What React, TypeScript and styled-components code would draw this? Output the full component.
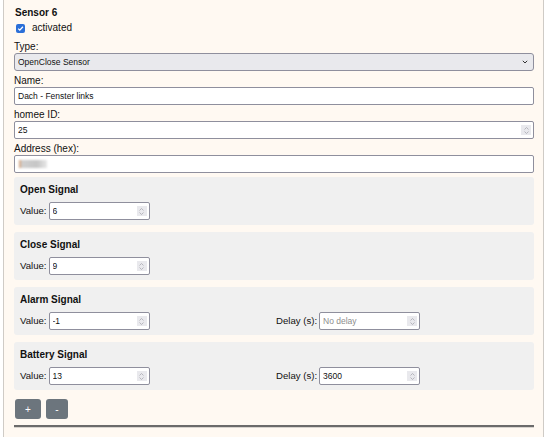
import React from "react";
import styled, { createGlobalStyle } from "styled-components";

const GlobalStyle = createGlobalStyle`
  html, body {
    margin: 0;
    padding: 0;
    background: #ffffff;
  }
  body {
    font-family: "Liberation Sans", Arial, sans-serif;
    color: #111;
  }
`;

type Signal = {
  title: string;
  value: string;
  delay?: string;
};

const signals: Signal[] = [
  { title: "Open Signal", value: "6" },
  { title: "Close Signal", value: "9" },
  { title: "Alarm Signal", value: "-1", delay: "" },
  { title: "Battery Signal", value: "13", delay: "3600" },
];

const Chevron: React.FC<{ up?: boolean }> = ({ up }) => (
  <svg width="5" height="3" viewBox="0 0 5 3">
    <path
      d={up ? "M0.5 2.5 L2.5 0.5 L4.5 2.5" : "M0.5 0.5 L2.5 2.5 L4.5 0.5"}
      fill="none"
      stroke="#a8a8b0"
      strokeWidth="0.8"
    />
  </svg>
);

const NumberField: React.FC<{
  value: string;
  width?: number;
  placeholder?: string;
}> = ({ value, width, placeholder }) => (
  <FieldBox $width={width}>
    <Input defaultValue={value} placeholder={placeholder} />
    <Spinner>
      <Chevron up />
      <Chevron />
    </Spinner>
  </FieldBox>
);

const App: React.FC = () => {
  return (
    <>
      <GlobalStyle />
      <Panel>
        <Title>Sensor 6</Title>
        <CheckRow>
          <CheckBox>
            <svg width="7" height="7" viewBox="0 0 7 7">
              <path
                d="M1.2 3.6 L2.8 5.1 L5.9 1.8"
                fill="none"
                stroke="#fff"
                strokeWidth="1.3"
              />
            </svg>
          </CheckBox>
          <CheckLabel>activated</CheckLabel>
        </CheckRow>

        <Label>Type:</Label>
        <SelectBox>
          <Select defaultValue="openclose">
            <option value="openclose">OpenClose Sensor</option>
          </Select>
          <svg width="6" height="4" viewBox="0 0 6 4">
            <path
              d="M0.8 0.8 L3 3 L5.2 0.8"
              fill="none"
              stroke="#333"
              strokeWidth="1"
            />
          </svg>
        </SelectBox>

        <Label>Name:</Label>
        <FieldBox>
          <Input defaultValue="Dach - Fenster links" />
        </FieldBox>

        <Label>homee ID:</Label>
        <NumberField value="25" />

        <Label>Address (hex):</Label>
        <FieldBox>
          <Redacted />
        </FieldBox>

        <Signals>
          {signals.map((s) => (
            <SignalBox key={s.title}>
              <SignalTitle>{s.title}</SignalTitle>
              <SignalRow>
                <Pair>
                  <InlineLabel>Value:</InlineLabel>
                  <NumberField value={s.value} width={101} />
                </Pair>
                {s.delay !== undefined && (
                  <Pair>
                    <InlineLabel>Delay (s):</InlineLabel>
                    <NumberField
                      value={s.delay}
                      width={101}
                      placeholder="No delay"
                    />
                  </Pair>
                )}
              </SignalRow>
            </SignalBox>
          ))}
        </Signals>

        <Buttons>
          <SmallButton $width={26}>+</SmallButton>
          <SmallButton $width={22}>-</SmallButton>
        </Buttons>
        <Rule />
      </Panel>
    </>
  );
};

export default App;

const Panel = styled.div`
  box-sizing: border-box;
  width: 541px;
  min-height: 100vh;
  margin-left: 3px;
  padding: 7px 9px 20px 10px;
  background: #fff9f2;
  border-left: 1px solid #cfcbc6;
  border-right: 1px solid #cfcbc6;
  font-size: 10px;
`;

const Title = styled.div`
  font-weight: 700;
  font-size: 10px;
  line-height: 12px;
  padding-left: 1px;
  margin-bottom: 3px;
`;

const CheckRow = styled.label`
  display: flex;
  align-items: center;
  gap: 7px;
  height: 12px;
  padding-left: 2px;
  margin-bottom: 7px;
`;

const CheckBox = styled.span`
  display: flex;
  align-items: center;
  justify-content: center;
  width: 9px;
  height: 9px;
  border-radius: 2px;
  background: #2b6fd8;
`;

const CheckLabel = styled.span`
  font-size: 10px;
  line-height: 12px;
`;

const Label = styled.div`
  font-size: 10px;
  line-height: 12px;
`;

const FieldBox = styled.div<{ $width?: number }>`
  box-sizing: border-box;
  display: flex;
  align-items: center;
  width: ${(p) => (p.$width ? `${p.$width}px` : "100%")};
  height: 18px;
  margin-bottom: 4px;
  padding: 0 2px 0 3px;
  background: #ffffff;
  border: 1px solid #8f8f9d;
  border-radius: 2px;
`;

const Input = styled.input`
  flex: 1;
  min-width: 0;
  padding: 0;
  border: none;
  outline: none;
  background: transparent;
  font-family: "Liberation Sans", Arial, sans-serif;
  font-size: 8.5px;
  color: #111;

  &::placeholder {
    color: #8d8d8d;
  }
`;

const Spinner = styled.span`
  display: flex;
  flex-direction: column;
  align-items: center;
  justify-content: center;
  gap: 1px;
  width: 10px;
  height: 10px;
  background: #e9e9ed;
`;

const SelectBox = styled(FieldBox)`
  background: #e9e9ed;
  padding-right: 5px;
  border-radius: 3px;
`;

const Select = styled.select`
  flex: 1;
  appearance: none;
  border: none;
  outline: none;
  padding: 0;
  background: transparent;
  font-family: "Liberation Sans", Arial, sans-serif;
  font-size: 8.5px;
  color: #111;
`;

const Redacted = styled.span`
  display: block;
  width: 28px;
  height: 8px;
  margin-left: 1px;
  background: linear-gradient(
    to right,
    #d99a6a 0,
    #cfcfcf 3px,
    #c6c6c6 18px,
    #e8e8e8 28px
  );
  filter: blur(1.2px);
`;

const Signals = styled.div`
  display: flex;
  flex-direction: column;
  gap: 7px;
  margin-top: 4px;
`;

const SignalBox = styled.div`
  box-sizing: border-box;
  height: 48px;
  padding: 7px 6px 0;
  background: #f0f0f0;
  border-radius: 3px;
`;

const SignalTitle = styled.div`
  font-weight: 700;
  font-size: 10px;
  line-height: 12px;
  margin-bottom: 6px;
`;

const SignalRow = styled.div`
  display: grid;
  grid-template-columns: 1fr 1fr;
  column-gap: 4px;
`;

const Pair = styled.div`
  display: flex;
  align-items: center;
  gap: 2px;

  & > div {
    margin-bottom: 0;
  }
`;

const InlineLabel = styled.span`
  font-size: 9.6px;
  line-height: 12px;
`;

const Buttons = styled.div`
  display: flex;
  gap: 5px;
  margin-top: 9px;
  padding-left: 1px;
`;

const SmallButton = styled.button<{ $width: number }>`
  width: ${(p) => p.$width}px;
  height: 20px;
  padding: 0;
  border: none;
  border-radius: 3px;
  background: #6c757d;
  color: #fff;
  font-family: "Liberation Sans", Arial, sans-serif;
  font-size: 10px;
  cursor: pointer;
`;

const Rule = styled.hr`
  margin: 6px 0 0;
  border: none;
  border-top: 2px solid #6b6b6b;
  border-bottom: 1px solid #d8d4cf;
`;
